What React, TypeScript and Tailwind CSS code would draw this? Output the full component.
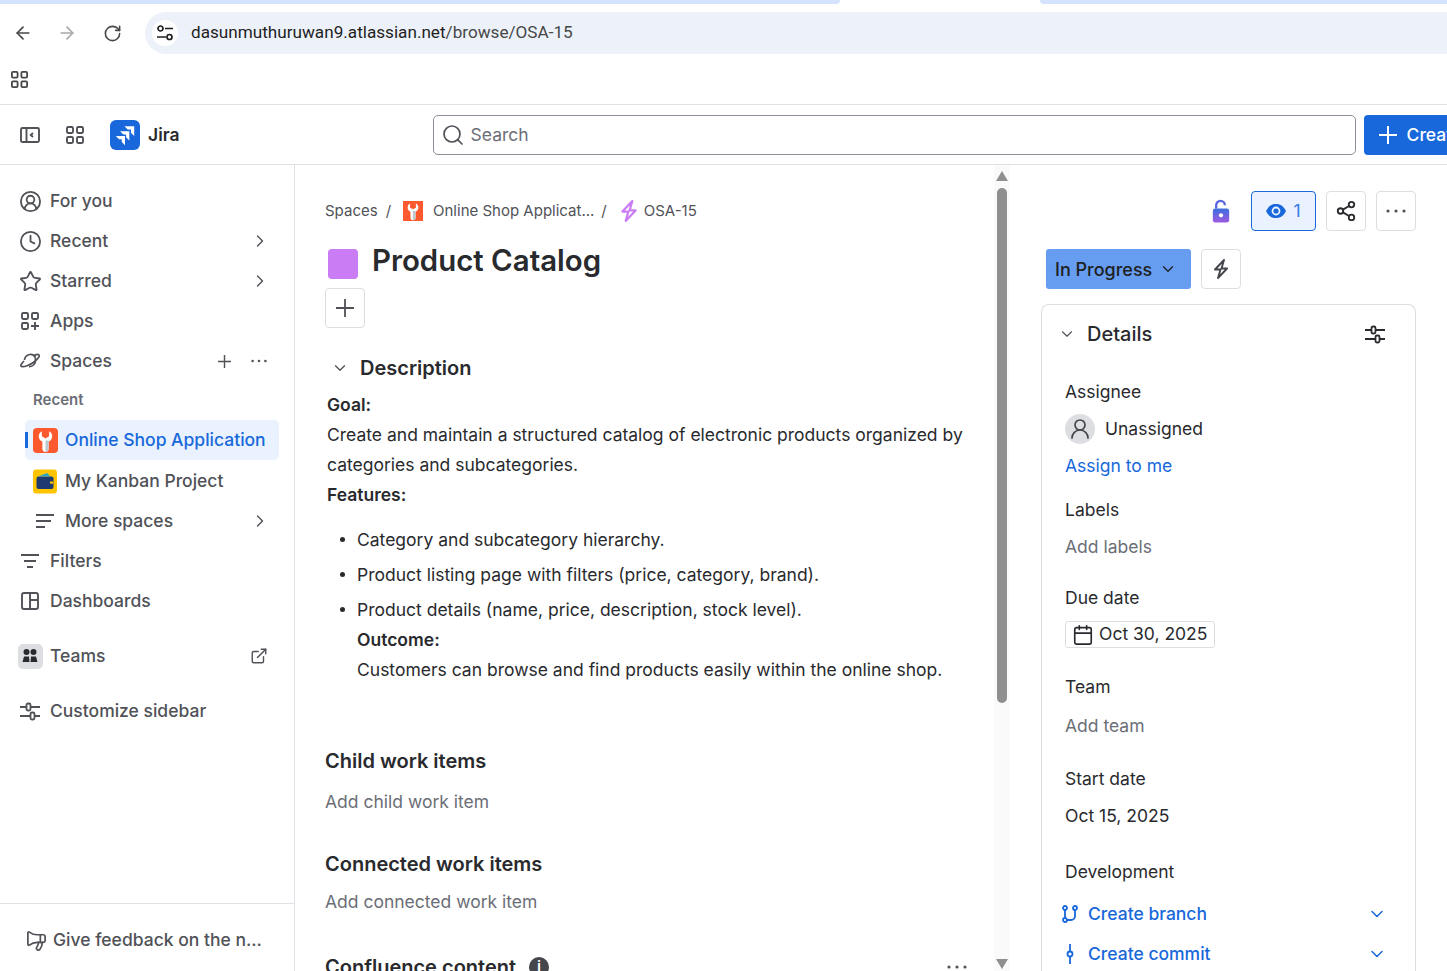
import React from "react";
import {
  ArrowLeft, ArrowRight, RotateCw, Search, ChevronRight, ChevronDown,
  CircleUserRound, Clock, Star, ExternalLink, Megaphone, Calendar, Share2, UserRound,
} from "lucide-react";

const Wrench = ({ cls }: { cls: string }) => (
  <svg viewBox="0 0 24 24" className={cls}>
    <rect width="24" height="24" fill="#fc5a2e" />
    <path d="M8.5 3 C4.5 5 4.5 11 9 13 V20 A3 3 0 0 0 15 20 V13 C19.5 11 19.5 5 15.5 3 V8 L12 10 L8.5 8 Z" fill="#fff" />
    <path d="M12 12 H15 V20 A3 3 0 0 1 12 23 Z" fill="#bcc8d0" />
  </svg>
);

const Wallet = () => (
  <svg viewBox="0 0 24 24" className="w-[25px] h-[25px] rounded-[4px]">
    <rect width="24" height="24" fill="#ffc400" />
    <rect x="3.5" y="7" width="17" height="12.5" rx="2" fill="#1f3a6e" />
    <path d="M5 7 L14 3.5 L17.5 7 Z" fill="#2aa5c7" />
    <rect x="17" y="12" width="3" height="2.2" fill="#ffc400" />
  </svg>
);

const JiraLogo = () => (
  <div className="w-[30px] h-[30px] bg-[#1868db] rounded-[6px] flex items-center justify-center">
    <svg viewBox="0 0 24 24" className="w-[26px] h-[26px]" fill="#fff">
      <path d="M11.5 4 H20.5 V13 L17.5 10 V7 H14.5 Z" />
      <path d="M7.5 8.5 H16 V17 L13 14 V11.5 H10.5 Z" />
      <path d="M3.5 13 H12 V21.5 L9 18.5 V16 H6.5 Z" />
    </svg>
  </div>
);

const Grid = ({ cls }: { cls: string }) => (
  <svg viewBox="0 0 20 20" className={cls} fill="none" stroke="currentColor" strokeWidth="1.9">
    <rect x="2" y="2" width="6" height="6" rx="1.2" />
    <rect x="12" y="2" width="6" height="6" rx="1.2" />
    <rect x="2" y="12" width="6" height="6" rx="1.2" />
    <rect x="12" y="12" width="6" height="6" rx="1.2" />
  </svg>
);

const Tune = ({ cls }: { cls: string }) => (
  <svg viewBox="0 0 20 20" className={cls} fill="none" stroke="currentColor" strokeWidth="1.8">
    <path d="M0 6 H6 M11 6 H20 M0 15 H10 M15 15 H20" />
    <rect x="6.5" y="2.5" width="4" height="7" rx="1.5" />
    <rect x="10.5" y="11.5" width="4" height="7" rx="1.5" />
  </svg>
);

const PlusIcon = ({ size, w = 1.6 }: { size: string; w?: number }) => (
  <svg viewBox="0 0 18 18" className={size} fill="none" stroke="currentColor" strokeWidth={w}>
    <path d="M9 0 V18 M0 9 H18" />
  </svg>
);

const Dots = ({ size }: { size: string }) => (
  <svg viewBox="0 0 20 4" className={size} fill="currentColor">
    <circle cx="2" cy="2" r="1.6" />
    <circle cx="10" cy="2" r="1.6" />
    <circle cx="18" cy="2" r="1.6" />
  </svg>
);

const Bolt = ({ cls, w = 1.8 }: { cls: string; w?: number }) => (
  <svg viewBox="0 0 16 20" className={cls} fill="none" stroke="currentColor" strokeWidth={w} strokeLinejoin="round">
    <path d="M11 1 L2 10.5 H7.5 L5 19 L14 9.5 H8.5 Z" />
  </svg>
);

const Lines = ({ cls, centered }: { cls: string; centered?: boolean }) => (
  <svg viewBox="0 0 18 16" className={cls} fill="none" stroke="currentColor" strokeWidth="1.8">
    {centered ? <path d="M0 2 H18 M3 8 H15 M6 14 H12" /> : <path d="M0 2 H18 M0 8 H15 M0 14 H9" />}
  </svg>
);

const Row = ({ icon, label, right, indent }: { icon: React.ReactNode; label: string; right?: React.ReactNode; indent?: boolean }) => (
  <div className={`h-10 flex items-center shrink-0 text-[#505258] font-medium ${indent ? "pl-[33px]" : "pl-[18px]"} pr-[24px]`}>
    <div className="w-6 mr-2 flex justify-center shrink-0">{icon}</div>
    <span className="flex-1">{label}</span>
    {right}
  </div>
);

const Chev = () => <ChevronRight className="w-[20px] h-[20px]" strokeWidth={1.7} />;
const sideIcon = "w-[23px] h-[23px] shrink-0";

const Sidebar = () => (
  <aside className="w-[295px] shrink-0 border-r border-[#dfe1e6] flex flex-col">
    <div className="flex-1 pt-4 flex flex-col">
      <Row icon={<CircleUserRound className={sideIcon} strokeWidth={1.9} />} label="For you" />
      <Row icon={<Clock className={sideIcon} strokeWidth={1.9} />} label="Recent" right={<Chev />} />
      <Row icon={<Star className={sideIcon} strokeWidth={1.9} />} label="Starred" right={<Chev />} />
      <Row
        icon={
          <svg viewBox="0 0 20 20" className="w-5 h-5" fill="none" stroke="currentColor" strokeWidth="1.9">
            <rect x="2" y="2" width="6" height="6" rx="1.2" />
            <rect x="12" y="2" width="6" height="6" rx="1.2" />
            <rect x="2" y="12" width="6" height="6" rx="1.2" />
            <path d="M15 11 V19 M11 15 H19" />
          </svg>
        }
        label="Apps"
      />
      <Row
        icon={
          <svg viewBox="0 0 20 20" className="w-5 h-5" fill="none" stroke="currentColor" strokeWidth="1.7">
            <path d="M4.5 9 A6 6 0 0 1 15 5.5 L15.5 9 A6 6 0 0 1 9 15.5" />
            <path d="M4 10 C1 13 0 15 1.5 15.5 C4 16.3 10 14 14 11 C18 8 20 5 19 4 C18 3 15.5 3.5 13 5" />
          </svg>
        }
        label="Spaces"
        right={
          <div className="flex items-center gap-[20px] mr-[3px]">
            <PlusIcon size="w-[13px] h-[13px]" w={2} />
            <Dots size="w-[16px] h-[4px]" />
          </div>
        }
      />
      <div className="h-[39px] flex items-center pl-[33px] text-[15px] font-semibold text-[#6b6e76]">Recent</div>
      <div className="ml-[25px] mr-[15px] h-10 shrink-0 rounded-[5px] bg-[#e9f2fe] flex items-center text-[#1868db] font-medium relative">
        <div className="absolute left-0 top-[12px] w-[3px] h-4 bg-[#1868db]" />
        <div className="ml-2 mr-[7px] w-[25px] h-[25px] rounded-[4px] overflow-hidden">
          <Wrench cls="w-[25px] h-[25px]" />
        </div>
        <span>Online Shop Application</span>
      </div>
      <div className="h-[1px] shrink-0" />
      <Row indent icon={<Wallet />} label="My Kanban Project" />
      <Row indent icon={<Lines cls="w-[18px] h-[16px]" />} label="More spaces" right={<Chev />} />
      <Row icon={<Lines centered cls="w-[18px] h-[16px]" />} label="Filters" />
      <Row
        icon={
          <svg viewBox="0 0 20 20" className="w-5 h-5" fill="none" stroke="currentColor" strokeWidth="1.9">
            <rect x="2" y="2" width="16" height="16" rx="2" />
            <path d="M10 2 V18 M10 9 H18" />
          </svg>
        }
        label="Dashboards"
      />
      <div className="h-[15px] shrink-0" />
      <Row
        icon={
          <div className="w-[25px] h-[25px] shrink-0 rounded-[5px] bg-[#dddee1] flex items-center justify-center">
            <svg viewBox="0 0 16 16" className="w-4 h-4" fill="#292a2e">
              <circle cx="4.5" cy="4" r="3" />
              <circle cx="11.5" cy="4" r="3" />
              <path d="M0.5 14 L2 8.5 H7 L7.5 14 Z M8.5 14 L9 8.5 H14 L15.5 14 Z" />
            </svg>
          </div>
        }
        label="Teams"
        right={<ExternalLink className="w-[18px] h-[18px] mr-[2px]" strokeWidth={1.9} />}
      />
      <div className="h-[15px] shrink-0" />
      <Row icon={<Tune cls="w-5 h-5" />} label="Customize sidebar" />
    </div>
    <div className="h-[68px] shrink-0 border-t border-[#dfe1e6] pl-[25px] pt-[5px] flex items-center text-[#505258] font-medium gap-[5px]">
      <Megaphone className="w-[23px] h-[23px] -scale-x-100" strokeWidth={1.8} />
      <span>Give feedback on the n...</span>
    </div>
  </aside>
);

const Bullet = ({ children }: { children: React.ReactNode }) => (
  <li className="h-[35px] flex items-center relative">
    <span className="absolute -left-[17px] top-[15px] w-[5px] h-[5px] rounded-full bg-[#292a2e]" />
    {children}
  </li>
);

const Main = () => (
  <main className="w-[699px] shrink-0 pl-[30px] flex flex-col text-[#292a2e] overflow-hidden">
    <div className="h-[20px] mt-[36px] shrink-0 flex items-center text-[15px] text-[#505258] whitespace-nowrap">
      <span>Spaces</span>
      <span className="ml-2 mr-[11px]">/</span>
      <div className="w-5 h-5 ml-[1px] mr-[10px]"><Wrench cls="w-5 h-5" /></div>
      <span>Online Shop Applicat...</span>
      <span className="ml-[7px] mr-[11px]">/</span>
      <Bolt cls="w-[18px] h-[22px] text-[#c97cf4] ml-[2px] mr-[6px]" w={2} />
      <span>OSA-15</span>
    </div>
    <div className="flex items-center mt-[15px] h-[50px] shrink-0">
      <div className="w-[30px] h-[30px] ml-[3px] mt-[6px] rounded-[4px] bg-[#c97cf4]" />
      <h1 className="ml-[14px] text-[29.4px] font-semibold leading-none">Product Catalog</h1>
    </div>
    <div className="w-10 h-10 shrink-0 mt-[2px] border border-[#dddee1] rounded-[4px] flex items-center justify-center text-[#505258]">
      <PlusIcon size="w-[18px] h-[18px]" w={1.8} />
    </div>
    <div className="flex items-center h-[30px] mt-[25px] shrink-0 ml-[6px]">
      <ChevronDown className="w-[18px] h-[18px] text-[#505258]" strokeWidth={1.7} />
      <h2 className="ml-[11px] text-[20px] font-semibold">Description</h2>
    </div>
    <div className="pl-[2px] pr-[30px] shrink-0 mt-[7px] leading-[30px]">
      <p className="font-semibold h-[30px] text-[#292a2e]">Goal:</p>
      <p>Create and maintain a structured catalog of electronic products organized by categories and subcategories.</p>
      <p className="font-semibold">Features:</p>
      <ul className="pl-[30px] mt-[12px]">
        <Bullet>Category and subcategory hierarchy.</Bullet>
        <Bullet>Product listing page with filters (price, category, brand).</Bullet>
        <Bullet>Product details (name, price, description, stock level).</Bullet>
        <li className="-mt-[2px]">
          <p className="font-semibold">Outcome:</p>
          <p>Customers can browse and find products easily within the online shop.</p>
        </li>
      </ul>
    </div>
    <h3 className="mt-[61px] h-[30px] shrink-0 flex items-center text-[20px] font-semibold">Child work items</h3>
    <p className="mt-[11px] h-[30px] shrink-0 flex items-center text-[#6b6e76]">Add child work item</p>
    <h3 className="mt-[32px] h-[30px] shrink-0 flex items-center text-[20px] font-semibold">Connected work items</h3>
    <p className="mt-[8px] h-[30px] shrink-0 flex items-center text-[#6b6e76]">Add connected work item</p>
    <div className="mt-[35px] pr-[26px] h-[30px] shrink-0 flex items-center">
      <h3 className="text-[20px] font-semibold">Confluence content</h3>
      <div className="ml-[13px] w-5 h-5 rounded-full bg-[#44464c] flex items-center justify-center text-white text-[13px] font-bold">i</div>
      <Dots size="ml-auto w-[22px] h-[4px] text-[#505258]" />
    </div>
  </main>
);

const Scrollbar = () => (
  <div className="w-4 shrink-0 bg-[#fafafa] flex flex-col items-center pt-[6px]">
    <div className="shrink-0 w-0 h-0 border-x-[6px] border-x-transparent border-b-[10px] border-b-[#8f8f8f]" />
    <div className="shrink-0 w-[10px] h-[515px] mt-[7px] rounded-full bg-[#8f8f8f]" />
    <div className="shrink-0 mt-[256px] w-0 h-0 border-x-[6px] border-x-transparent border-t-[10px] border-t-[#8f8f8f]" />
  </div>
);

const Field = ({ label, children, cls }: { label: string; children: React.ReactNode; cls: string }) => (
  <div className={`shrink-0 ${cls}`}>
    <div className="h-[26px] flex items-center text-[#292a2e]">{label}</div>
    {children}
  </div>
);

const Btn = ({ children, cls }: { children: React.ReactNode; cls?: string }) => (
  <div className={`w-10 h-10 border border-[#dddee1] rounded-[4px] flex items-center justify-center text-[#292a2e] ${cls ?? ""}`}>{children}</div>
);

const Panel = () => (
  <section className="flex-1 flex flex-col pl-[31px] overflow-hidden min-w-0 pr-[31px]">
    <div className="mt-[26px] h-10 shrink-0 flex items-center justify-end gap-[10px]">
      <svg viewBox="0 0 20 26" className="w-[20px] h-[25px] mr-[10px]">
        <defs>
          <linearGradient id="lk" x1="0" y1="0" x2="0" y2="1">
            <stop offset="0" stopColor="#3b6fe0" />
            <stop offset="1" stopColor="#a05ae0" />
          </linearGradient>
        </defs>
        <path d="M5 10 V6.5 a4.5 4.5 0 0 1 9 0" fill="none" stroke="#5a66e0" strokeWidth="2.4" />
        <rect x="1.5" y="10" width="17" height="14.5" rx="2.5" fill="url(#lk)" />
        <circle cx="10" cy="17" r="2.2" fill="#fff" />
      </svg>
      <div className="w-[65px] h-10 border border-[#1868db] bg-[#e9f2fe] rounded-[4px] flex items-center justify-center gap-[7px]">
        <svg viewBox="0 0 20 14" className="w-[20px] h-[14px]">
          <path d="M0 7 C3 1 6.5 0 10 0 C13.5 0 17 1 20 7 C17 13 13.5 14 10 14 C6.5 14 3 13 0 7 Z" fill="#1868db" />
          <circle cx="10" cy="7" r="4.4" fill="#e9f2fe" />
          <circle cx="10" cy="7" r="2.6" fill="#1868db" />
        </svg>
        <span className="text-[#357de8]">1</span>
      </div>
      <Btn><Share2 className="w-[22px] h-[22px]" strokeWidth={2} /></Btn>
      <Btn><Dots size="w-[20px] h-[4px] text-[#505258]" /></Btn>
    </div>
    <div className="mt-[18px] ml-[5px] h-10 shrink-0 flex items-center gap-[10px]">
      <div className="w-[145px] h-10 rounded-[3px] bg-[#669df1] flex items-center pl-[9px] gap-[7px] text-[18px] text-[#1e1f21] font-medium">
        <span>In Progress</span>
        <ChevronDown className="w-[18px] h-[18px]" strokeWidth={1.7} />
      </div>
      <Btn><Bolt cls="w-[16px] h-[20px] text-[#44464c]" w={1.9} /></Btn>
    </div>
    <div className="mt-[15px] flex-1 min-h-0 border border-b-0 border-[#dddee1] rounded-t-[8px] pl-[23px] pr-[29px] overflow-hidden flex flex-col">
      <div className="h-[58px] shrink-0 flex items-center text-[#292a2e]">
        <ChevronDown className="w-[18px] h-[18px] -ml-[7px] text-[#505258]" strokeWidth={1.5} />
        <span className="ml-[11px] text-[20px] font-medium flex-1">Details</span>
        <Tune cls="w-5 h-5 mr-[1px]" />
      </div>
      <Field label="Assignee" cls="mt-[16px]">
        <div className="mt-[9px] h-[30px] flex items-center gap-[10px] text-[#292a2e]">
          <div className="w-[30px] h-[30px] rounded-full bg-[#dddee1] flex items-center justify-center">
            <UserRound className="w-[24px] h-[24px] text-[#44464c]" strokeWidth={1.7} />
          </div>
          Unassigned
        </div>
        <div className="mt-[9px] h-[26px] flex items-center text-[#1868db]">Assign to me</div>
      </Field>
      <Field label="Labels" cls="mt-[18px]">
        <div className="mt-[11px] h-[26px] flex items-center text-[#6b6e76]">Add labels</div>
      </Field>
      <Field label="Due date" cls="mt-[25px]">
        <div className="mt-[10px] w-[150px] h-[27px] border border-[#dddee1] rounded-[3px] flex items-center pl-[6px] gap-[5px] text-[#292a2e]">
          <Calendar className="w-[22px] h-[22px]" strokeWidth={1.8} />
          Oct 30, 2025
        </div>
      </Field>
      <Field label="Team" cls="mt-[26px]">
        <div className="mt-[13px] h-[26px] flex items-center text-[#6b6e76]">Add team</div>
      </Field>
      <Field label="Start date" cls="mt-[27px]">
        <div className="mt-[11px] h-[26px] flex items-center text-[#292a2e]">Oct 15, 2025</div>
      </Field>
      <Field label="Development" cls="mt-[30px]">
        <div className="mt-[16px] h-[26px] flex items-center text-[#1868db] -ml-[3px]">
          <svg viewBox="0 0 16 18" className="w-[16px] h-[18px] mr-[10px]" fill="none" stroke="currentColor" strokeWidth="1.8">
            <circle cx="3" cy="3" r="2" />
            <circle cx="13" cy="3" r="2" />
            <circle cx="3" cy="15" r="2" />
            <path d="M3 5 V13 M13 5 V11 A4 4 0 0 1 9 15 H5" />
          </svg>
          <span className="flex-1 font-medium">Create branch</span>
          <ChevronDown className="w-[20px] h-[20px] -mr-[1px]" strokeWidth={1.8} />
        </div>
        <div className="mt-[14px] h-[26px] flex items-center text-[#1868db] -ml-[3px]">
          <svg viewBox="0 0 16 20" className="w-[16px] h-[20px] mr-[10px]" fill="none" stroke="currentColor" strokeWidth="1.8">
            <circle cx="8" cy="10" r="2.5" />
            <path d="M8 0 V7.5 M8 12.5 V20" />
          </svg>
          <span className="flex-1 font-medium">Create commit</span>
          <ChevronDown className="w-[20px] h-[20px] -mr-[1px]" strokeWidth={1.8} />
        </div>
      </Field>
    </div>
  </section>
);

export default function App() {
  return (
    <div className="w-[1447px] h-[971px] overflow-hidden bg-white flex flex-col text-[17.5px] font-['Inter',sans-serif]">
      <div className="h-[4px] shrink-0 flex">
        <div className="w-[840px] bg-[#d3e3fd] rounded-br-[8px]" />
        <div className="w-[200px]" />
        <div className="flex-1 bg-[#d3e3fd] rounded-bl-[8px]" />
      </div>
      <div className="h-[42px] mt-[8px] shrink-0 flex text-[#474747]">
        <div className="w-[145px] shrink-0 flex items-center pl-[13px] gap-[24px] h-[42px]">
          <ArrowLeft className="w-5 h-5" strokeWidth={2} />
          <ArrowRight className="w-5 h-5 text-[#a8a8a8]" strokeWidth={2} />
          <RotateCw className="w-[19px] h-[19px] ml-[2px]" strokeWidth={2} />
        </div>
        <div className="flex-1 h-[42px] rounded-l-[21px] bg-[#edf2fa] flex items-center pl-[7px]">
          <div className="w-[26px] h-[26px] rounded-full bg-white flex items-center justify-center">
            <svg viewBox="0 0 18 18" className="w-[18px] h-[18px] text-[#1f1f1f]" fill="none" stroke="currentColor" strokeWidth="1.7">
              <circle cx="4.5" cy="4.5" r="2.5" />
              <path d="M9 4.5 H17 M1 13 H10" />
              <circle cx="13.5" cy="13" r="2.5" />
            </svg>
          </div>
          <span className="ml-[13px] text-[17.15px] font-['Roboto',sans-serif] text-[#1f1f1f]">
            dasunmuthuruwan9.atlassian.net<span className="text-[#474747]">/browse/OSA-15</span>
          </span>
        </div>
      </div>
      <div className="h-[51px] shrink-0 border-b border-[#dfe1e6] pl-[10px] pt-[16px] text-[#474747]">
        <Grid cls="w-[19px] h-[19px]" />
      </div>
      <header className="h-[60px] shrink-0 border-b border-[#dfe1e6] flex items-center text-[#505258]">
        <svg viewBox="0 0 20 20" className="ml-[20px] w-5 h-5" fill="none" stroke="currentColor" strokeWidth="1.9">
          <rect x="1" y="3" width="18" height="14" rx="1.5" />
          <path d="M6.5 3 V17 M13 8 L10.8 10 L13 12" />
        </svg>
        <Grid cls="ml-[25px] w-5 h-5" />
        <div className="ml-[25px]"><JiraLogo /></div>
        <span className="ml-2 mt-[2px] font-semibold text-[#292a2e]">Jira</span>
        <div className="ml-[253px] w-[923px] h-10 border border-[#8c8f97] rounded-[5px] flex items-center pl-[7px] gap-[6px] text-[#6b6e76]">
          <Search className="w-[24px] h-[24px] text-[#505258]" strokeWidth={1.7} />
          <span className="mt-[2px]">Search</span>
        </div>
        <div className="ml-2 flex-1 h-10 rounded-l-[4px] bg-[#1868db] flex items-center pl-[15px] gap-[10px] text-white font-medium overflow-hidden whitespace-nowrap">
          <PlusIcon size="w-[18px] h-[18px] shrink-0" w={2} />
          <span className="mt-[2px]">Create</span>
        </div>
      </header>
      <div className="flex-1 min-h-0 flex">
        <Sidebar />
        <Main />
        <Scrollbar />
        <Panel />
      </div>
    </div>
  );
}
